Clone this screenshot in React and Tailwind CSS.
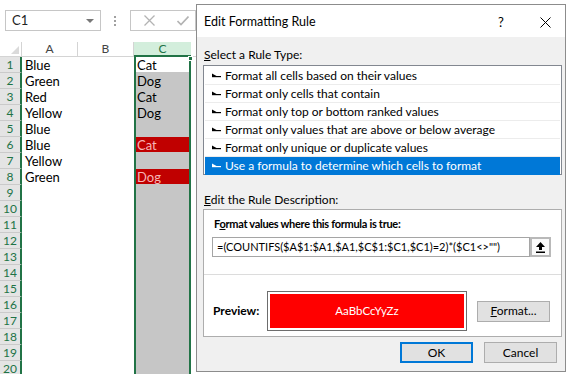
import React from "react";

const colA = ["Blue", "Green", "Red", "Yellow", "Blue", "Blue", "Yellow", "Green"];
const colC = ["Cat", "Dog", "Cat", "Dog", "", "Cat", "", "Dog"];
const ruleTypes = [
  "Format all cells based on their values",
  "Format only cells that contain",
  "Format only top or bottom ranked values",
  "Format only values that are above or below average",
  "Format only unique or duplicate values",
  "Use a formula to determine which cells to format",
];

function Bullet({ white }) {
  return (
    <svg width="9" height="6" viewBox="0 0 9 6" className="shrink-0">
      <path d="M0 0.5 L4.5 3 L0 3 Z" fill={white ? "#fff" : "#000"} />
      <rect x="0" y="3" width="9" height="1.2" fill={white ? "#fff" : "#000"} />
    </svg>
  );
}

function Excel() {
  const rows = Array.from({ length: 20 }, (_, i) => i + 1);
  return (
    <div className="flex flex-col w-[196px] font-['Lato',sans-serif]">
      {/* formula bar */}
      <div className="h-[42px] flex items-start pt-[10px] pl-[5px] bg-white">
        <div className="w-[102px] h-[21px] border border-[#c6c6c6] flex items-center pl-[6px] pr-[6px] text-[13px] text-[#222]">
          <span className="flex-1">C1</span>
          <svg width="8" height="4" viewBox="0 0 8 4"><path d="M0 0 L8 0 L4 4 Z" fill="#777" /></svg>
        </div>
        <div className="w-[30px] h-[21px] flex flex-col items-center justify-center gap-[2px]">
          <div className="w-[2px] h-[2px] bg-[#a0a0a0]" />
          <div className="w-[2px] h-[2px] bg-[#a0a0a0]" />
          <div className="w-[2px] h-[2px] bg-[#a0a0a0]" />
        </div>
        <div className="w-[70px] h-[21px] border border-[#c6c6c6] flex items-center pl-[13px] gap-[22px]">
          <svg width="11" height="11" viewBox="0 0 11 11"><path d="M0.5 0.5 L10.5 10.5 M10.5 0.5 L0.5 10.5" stroke="#b3b3b3" strokeWidth="1.3" /></svg>
          <svg width="12" height="10" viewBox="0 0 12 10"><path d="M0.5 5 L4 8.5 L11.5 0.5" stroke="#b3b3b3" strokeWidth="1.6" fill="none" /></svg>
        </div>
      </div>
      {/* column header */}
      <div className="flex h-[15px] text-[12px] leading-[14px]">
        <div className="w-[22px] h-full border-r border-b border-[#d4d4d4] flex items-end justify-end pr-[2px] pb-[2px] bg-white">
          <svg width="8" height="8" viewBox="0 0 8 8"><path d="M8 0 L8 8 L0 8 Z" fill="#dadada" /></svg>
        </div>
        <div className="w-[56px] h-full border-r border-b border-[#d4d4d4] text-center text-[#444]">A</div>
        <div className="w-[56px] h-full border-r border-b border-[#d4d4d4] text-center text-[#444]">B</div>
        <div className="w-[57px] h-full border-b-2 border-[#217346] bg-[#d3eedc] text-center text-[#217346]">C</div>
        <div className="flex-1 h-full border-b border-[#d4d4d4] bg-white" />
      </div>
      {rows.map((r) => {
        const a = colA[r - 1] || "";
        const c = colC[r - 1] || "";
        const red = r === 6 || r === 8;
        const cBg = r === 1 ? "bg-white" : red ? "bg-[#c00000]" : "bg-[#c6c6c6]";
        const cText = red ? "text-[#f6b6b6]" : "text-black";
        return (
          <div key={r} className="flex h-[16px] shrink-0">
            <div className="w-[22px] h-full bg-[#e4e4e4] border-r-2 border-r-[#217346] border-b border-b-[#cacaca] text-[12px] leading-[15px] text-center text-[#217346]">
              {r}
            </div>
            <div className="w-[56px] h-full pl-[3px] text-[13px] leading-[16px] text-black bg-white">{a}</div>
            <div className="w-[56px] h-full bg-white" />
            <div className="w-[57px] h-full border-l-2 border-r-2 border-[#217346] bg-[#c6c6c6]">
              <div className={`h-[15px] ${cBg} ${cText} pl-[1px] text-[13px] leading-[16px]`}>{c}</div>
            </div>
            <div className="flex-1 h-full bg-white" />
          </div>
        );
      })}
    </div>
  );
}

function Dialog() {
  return (
    <div className="absolute left-[196px] top-[4px] w-[370px] h-[368px] border border-[#8c8c8c] bg-[#f0f0f0] flex flex-col font-['Lato',sans-serif] text-[12px] text-black">
      {/* title bar */}
      <div className="h-[32px] bg-white flex items-center pl-[7px] pr-[14px] pt-[3px]">
        <span className="flex-1 text-[12.5px]">Edit Formatting Rule</span>
        <span className="w-[10px] text-center text-[13px] mr-[34px]">?</span>
        <svg width="11" height="11" viewBox="0 0 11 11"><path d="M0.5 0.5 L10.5 10.5 M10.5 0.5 L0.5 10.5" stroke="#000" strokeWidth="1" /></svg>
      </div>
      <div className="flex flex-col px-[6px]">
        <div className="mt-[10px] pl-[1px] leading-[16px]"><span className="underline">S</span>elect a Rule Type:</div>
        <div className="mt-[2px] w-[359px] h-[110px] border border-[#828790] bg-white p-[1px] pt-[1px] flex flex-col">
          {ruleTypes.map((t, i) => {
            const sel = i === ruleTypes.length - 1;
            return (
              <div
                key={t}
                className={`h-[18px] shrink-0 flex items-center gap-[4px] pl-[7px] ${sel ? "bg-[#0078d7] text-white" : "border-b border-[#ececec]"}`}
              >
                <Bullet white={sel} />
                <span className="leading-[16px]">{t}</span>
              </div>
            );
          })}
        </div>
        <div className="mt-[17px] pl-[1px] leading-[16px]"><span className="underline">E</span>dit the Rule Description:</div>
        <div className="mt-[1px] w-[359px] h-[128px] border border-[#adadad] bg-white flex flex-col">
          <div className="pt-[6px] pl-[10px] font-bold text-[11px] tracking-[-0.3px] leading-[16px]">F<span className="underline">o</span>rmat values where this formula is true:</div>
          <div className="mt-[5px] ml-[8px] flex h-[20px]">
            <div className="w-[318px] h-full border border-[#a5a5a5] bg-white pl-[4px] leading-[18px] text-[11px]">
              =(COUNTIFS($A$1:$A1,$A1,$C$1:$C1,$C1)=2)*($C1&lt;&gt;"")
            </div>
            <div className="w-[21px] h-full border-2 border-[#b9b9b9] bg-[#fafafa] flex items-center justify-center">
              <svg width="9" height="11" viewBox="0 0 9 11">
                <path d="M4.5 0 L9 5 L6 5 L6 8 L3 8 L3 5 L0 5 Z" fill="#000" />
                <rect x="0" y="9.5" width="9" height="1.5" fill="#000" />
              </svg>
            </div>
          </div>
          <div className="mt-[17px] h-px bg-[#dcdcdc]" />
          <div className="mt-[16px] flex items-center pl-[9px]">
            <div className="w-[54px] font-bold">Preview:</div>
            <div className="w-[200px] h-[40px] border border-[#6d6d6d] p-[2px] bg-white">
              <div className="w-full h-full bg-[#ff0000] flex items-center justify-center text-white text-[11.5px]">
                AaBbCcYyZz
              </div>
            </div>
            <div className="ml-[10px] w-[73px] h-[21px] border border-[#adadad] bg-[#e1e1e1] flex items-center justify-center">
              <span><span className="underline">F</span>ormat...</span>
            </div>
          </div>
        </div>
        <div className="mt-[5px] flex justify-end gap-[11px] pr-[2px]">
          <div className="w-[73px] h-[21px] border-2 border-[#0078d7] bg-[#e1e1e1] flex items-center justify-center">OK</div>
          <div className="w-[73px] h-[21px] border border-[#adadad] bg-[#e1e1e1] flex items-center justify-center">Cancel</div>
        </div>
      </div>
    </div>
  );
}

export default function App() {
  return (
    <div className="relative w-[570px] h-[374px] overflow-hidden bg-white">
      <Excel />
      <div className="absolute left-[188px] top-[56px] w-[5px] h-[5px] bg-[#217346] border border-white" />
      <Dialog />
    </div>
  );
}
